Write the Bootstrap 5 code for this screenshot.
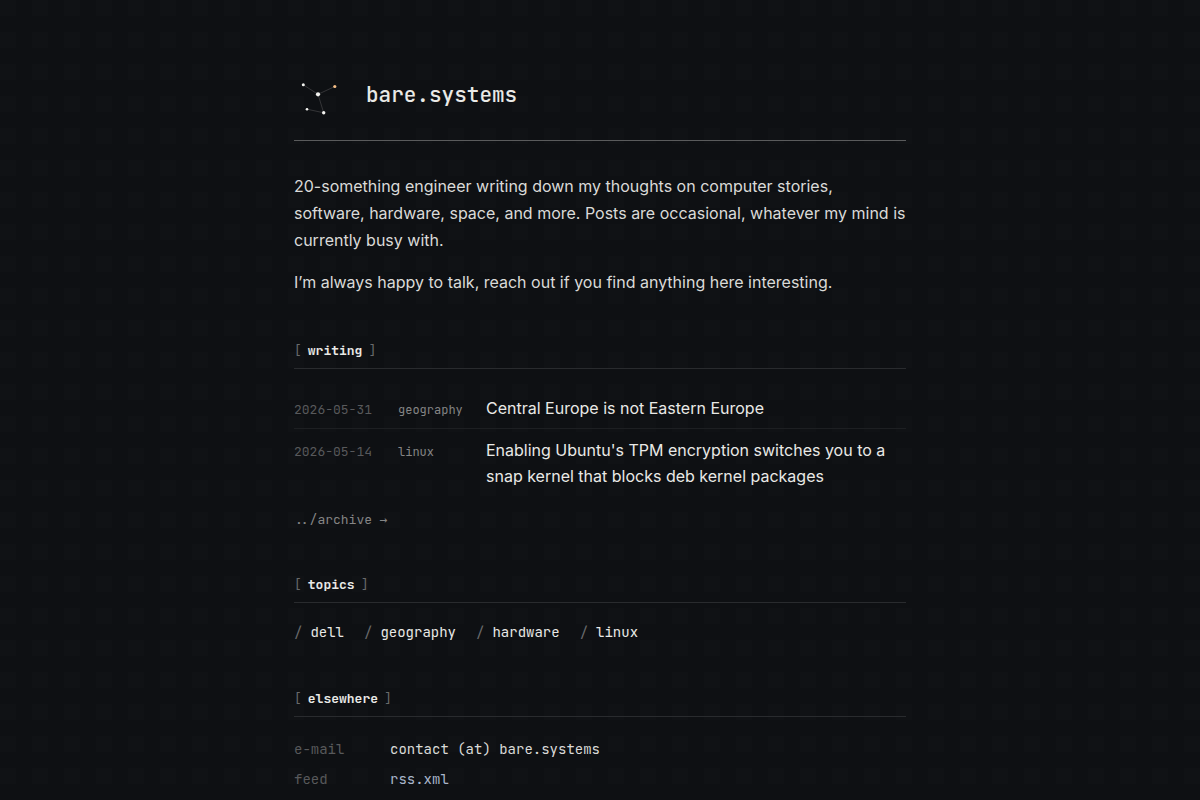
<!DOCTYPE html>
<html lang="en">
<head>
<meta charset="utf-8">
<meta name="viewport" content="width=device-width, initial-scale=1">
<title>bare.systems</title>
<link href="https://cdn.jsdelivr.net/npm/bootstrap@5.3.0/dist/css/bootstrap.min.css" rel="stylesheet">
<style>
  :root { --mono: "JetBrains Mono", "DejaVu Sans Mono", monospace; --rule: #292b2e; --dim: #58595b; --muted: #858585; --text: #dadad8; --bright: #e9e9e6; }
  body {
    color: var(--text); background-color: #0e1013; line-height: 27px;
    font-family: Inter, sans-serif;
    background-image: conic-gradient(from 270deg at 16px 16px, rgba(255,255,255,.009) 90deg, transparent 0);
    background-size: 32px 32px;
  }
  a { color: var(--bright); text-decoration: none; }
  a:hover { text-decoration: underline; }
  .page { max-width: 660px; padding: 72px 24px 48px; }
  .mono { font-family: var(--mono); font-size: 14px; }
  .masthead { padding-bottom: 20px; margin-bottom: 32px; border-bottom: 1px solid #5a5b5c; }
  .site-name { font-family: var(--mono); font-size: 21px; line-height: 46px; font-weight: 500; }
  .intro { margin-bottom: 45px; }
  .intro p { margin-bottom: 15px; }
  .page section { margin-top: 43px; }
  .section-title { font-family: var(--mono); font-size: 13px; line-height: 20px; font-weight: 600; color: var(--bright); padding-bottom: 7px; border-bottom: 1px solid var(--rule); }
  .section-title::before { content: "["; margin-right: 6px; }
  .section-title::after { content: "]"; margin-left: 6px; }
  .section-title::before, .section-title::after { color: #696a6b; font-weight: 400; }
  .posts { margin: 18px 0 12px; }
  .post { line-height: 26px; padding: 8px 0 7px; display: grid; grid-template-columns: 80px 64px 1fr; column-gap: 24px; align-items: baseline; }
  .post + .post { border-top: 1px solid #1d1f22; }
  .post time, .post .tag { font-family: var(--mono); line-height: 20px; }
  .post time { font-size: 13px; color: var(--dim); }
  .post .tag { font-size: 12px; color: var(--muted); }
  .archive { font-family: var(--mono); font-size: 13px; line-height: 24px; color: var(--muted); }
  .arrow { font-family: "DejaVu Sans Mono", monospace; }
  .topics { column-gap: 20px; }
  .topic::before { content: "/"; color: #696a6b; margin-right: 8px; }
  .contact { display: grid; grid-template-columns: 72px 1fr; column-gap: 24px; line-height: 30px; margin-top: 17px; }
  .contact dt { font-weight: 400; color: var(--dim); }
  .feed { color: #a9b6cb; }
</style>
</head>
<body>
<div class="page mx-auto">
  <header class="masthead d-flex align-items-start gap-4">
    <svg width="48" height="48" viewBox="0 0 48 48" aria-hidden="true">
      <path d="M9.3 12.8 24 22.3 40.8 14.5M24 22.3l5.7 18.5L13 37.2" fill="none" stroke="#3d3e40" stroke-width=".8"/>
      <g fill="#f2f2ef"><circle cx="9.3" cy="12.8" r="1.5"/><circle cx="24" cy="22.3" r="2.1"/><circle cx="29.7" cy="40.8" r="1.7"/><circle cx="13" cy="37.2" r="1.3"/></g>
      <circle cx="40.8" cy="14.5" r="1.6" fill="#f5be86"/>
    </svg>
    <h1 class="site-name mb-0"><a href="#">bare.systems</a></h1>
  </header>
  <main>
    <div class="intro">
      <p>20-something engineer writing down my thoughts on computer stories, software, hardware, space, and more. Posts are occasional, whatever my mind is currently busy with.</p>
      <p>I’m always happy to talk, reach out if you find anything here interesting.</p>
    </div>
    <section>
      <h2 class="section-title mb-0">writing</h2>
      <ul class="posts list-unstyled">
        <li class="post"><time datetime="2026-05-31">2026-05-31</time><a class="tag" href="#geography">geography</a><a href="#">Central Europe is not Eastern Europe</a></li>
        <li class="post"><time datetime="2026-05-14">2026-05-14</time><a class="tag" href="#linux">linux</a><a href="#">Enabling Ubuntu's TPM encryption switches you to a snap kernel that blocks deb kernel packages</a></li>
      </ul>
      <a class="archive d-block" href="#archive">../archive <span class="arrow">→</span></a>
    </section>
    <section>
      <h2 class="section-title mb-3">topics</h2>
      <nav class="topics mono d-flex flex-wrap" aria-label="Topics">
        <a class="topic" href="#dell">dell</a><a class="topic" href="#geography">geography</a><a class="topic" href="#hardware">hardware</a><a class="topic" href="#linux">linux</a>
      </nav>
    </section>
    <section>
      <h2 class="section-title mb-0">elsewhere</h2>
      <dl class="contact mono">
        <dt>e-mail</dt><dd class="mb-0">contact (at) bare.systems</dd>
        <dt>feed</dt><dd class="mb-0"><a class="feed" href="#rss">rss.xml</a></dd>
      </dl>
    </section>
  </main>
</div>
<script src="https://cdn.jsdelivr.net/npm/bootstrap@5.3.0/dist/js/bootstrap.bundle.min.js"></script>
</body>
</html>
